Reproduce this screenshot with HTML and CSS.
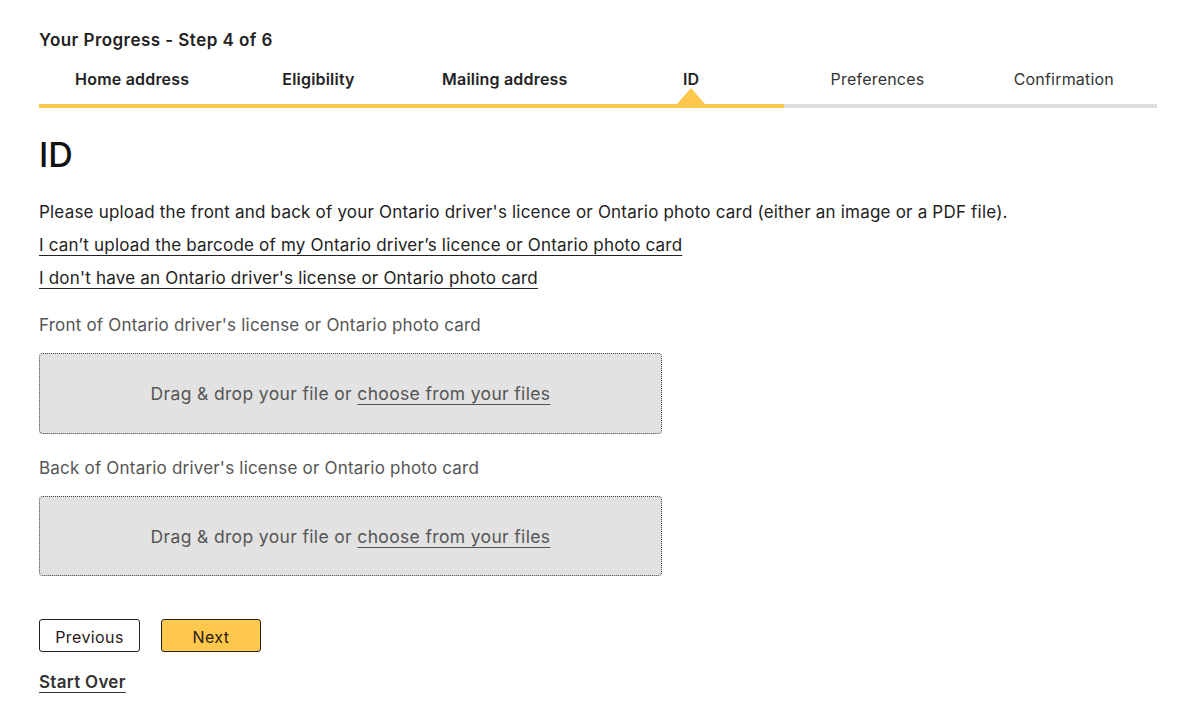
FILE: index.html
```html
<!DOCTYPE html>
<html lang="en">
<head>
<meta charset="utf-8">
<title>ID - Step 4 of 6</title>
<link rel="stylesheet" href="styles.css">
</head>
<body>
<main class="page">
  <section class="progress">
    <h2 class="progress-title">Your Progress - Step 4 of 6</h2>
    <ol class="steps">
      <li class="step done">Home address</li>
      <li class="step done">Eligibility</li>
      <li class="step done">Mailing address</li>
      <li class="step current">ID</li>
      <li class="step">Preferences</li>
      <li class="step">Confirmation</li>
    </ol>
  </section>

  <h1 class="heading">ID</h1>

  <p class="intro">Please upload the front and back of your Ontario driver's licence or Ontario photo card (either an image or a PDF file).</p>
  <p class="link-row"><a href="#" class="link">I can’t upload the barcode of my Ontario driver’s licence or Ontario photo card</a></p>
  <p class="link-row"><a href="#" class="link">I don't have an Ontario driver's license or Ontario photo card</a></p>

  <div class="field first">
    <div class="field-label">Front of Ontario driver's license or Ontario photo card</div>
    <div class="dropzone">Drag &amp; drop your file or&nbsp;<a href="#" class="choose">choose from your files</a></div>
  </div>

  <div class="field">
    <div class="field-label">Back of Ontario driver's license or Ontario photo card</div>
    <div class="dropzone short">Drag &amp; drop your file or&nbsp;<a href="#" class="choose">choose from your files</a></div>
  </div>

  <div class="actions">
    <button class="btn btn-secondary" type="button">Previous</button>
    <button class="btn btn-primary" type="button">Next</button>
  </div>

  <p class="start-row"><a href="#" class="start-over">Start Over</a></p>
</main>
</body>
</html>
```

FILE: styles.css
```css
* { box-sizing: border-box; }

html, body {
  margin: 0;
  padding: 0;
  background: #ffffff;
}

body {
  font-family: "Inter", "Open Sans", sans-serif;
  color: #222;
}

.page {
  padding: 30px 38px 20px 39px;
}

.progress-title {
  margin: 0;
  font-size: 17px;
  line-height: 20px;
  font-weight: 600;
  color: #222;
  letter-spacing: 0.45px;
}

.steps {
  list-style: none;
  margin: 19px 0 0;
  padding: 0;
  display: grid;
  grid-template-columns: repeat(6, 1fr);
}

.step {
  position: relative;
  text-align: center;
  font-size: 16px;
  line-height: 20px;
  padding: 0 0 15px;
  color: #333;
  letter-spacing: 0.2px;
  border-bottom: 4px solid #dedede;
}

.step.done,
.step.current {
  font-weight: 600;
  color: #222;
  border-bottom-color: #fec84c;
}

.step.current::after {
  content: "";
  position: absolute;
  left: 50%;
  bottom: 0;
  transform: translateX(-50%);
  width: 0;
  height: 0;
  border-left: 14px solid transparent;
  border-right: 14px solid transparent;
  border-bottom: 16px solid #fec84c;
}

.heading {
  margin: 27px 0 0;
  font-size: 34px;
  line-height: 40px;
  font-weight: 500;
  color: #111;
}

.intro,
.link-row {
  margin: 0;
  font-size: 17px;
  line-height: 33px;
  letter-spacing: 0.2px;
  color: #222;
}

.intro { margin-top: 21px; }

.link {
  color: #222;
  text-decoration: underline;
  text-underline-offset: 4px;
}

.field.first { margin-top: 18px; }
.field { margin-top: 22px; }

.field-label {
  font-size: 17px;
  line-height: 24px;
  letter-spacing: 0.2px;
  color: #555;
}

.dropzone {
  margin-top: 16px;
  width: 623px;
  height: 81px;
  background: #e2e2e2;
  border: 1px dotted #444;
  border-radius: 4px;
  display: flex;
  align-items: center;
  justify-content: center;
  font-size: 17.5px;
  letter-spacing: 0.35px;
  color: #555;
}

.dropzone.short { height: 80px; }

.choose {
  color: #555;
  text-decoration: underline;
  text-underline-offset: 4px;
}

.actions {
  display: flex;
  gap: 21px;
  margin-top: 43px;
}

.btn {
  font-family: inherit;
  font-size: 16px;
  letter-spacing: 0.4px;
  line-height: 20px;
  height: 33px;
  border: 1px solid #222;
  border-radius: 3px;
  color: #2a1a1a;
  cursor: pointer;
  padding: 2px 0 0;
}

.btn-secondary {
  width: 101px;
  background: #fff;
}

.btn-primary {
  width: 100px;
  background: #fec84c;
}

.start-row {
  margin: 20px 0 0;
  line-height: 20px;
}

.start-over {
  font-size: 17px;
  line-height: 20px;
  font-weight: 600;
  letter-spacing: 0.3px;
  color: #333;
  text-decoration: underline;
  text-decoration-thickness: 1px;
  text-underline-offset: 4px;
}
```
